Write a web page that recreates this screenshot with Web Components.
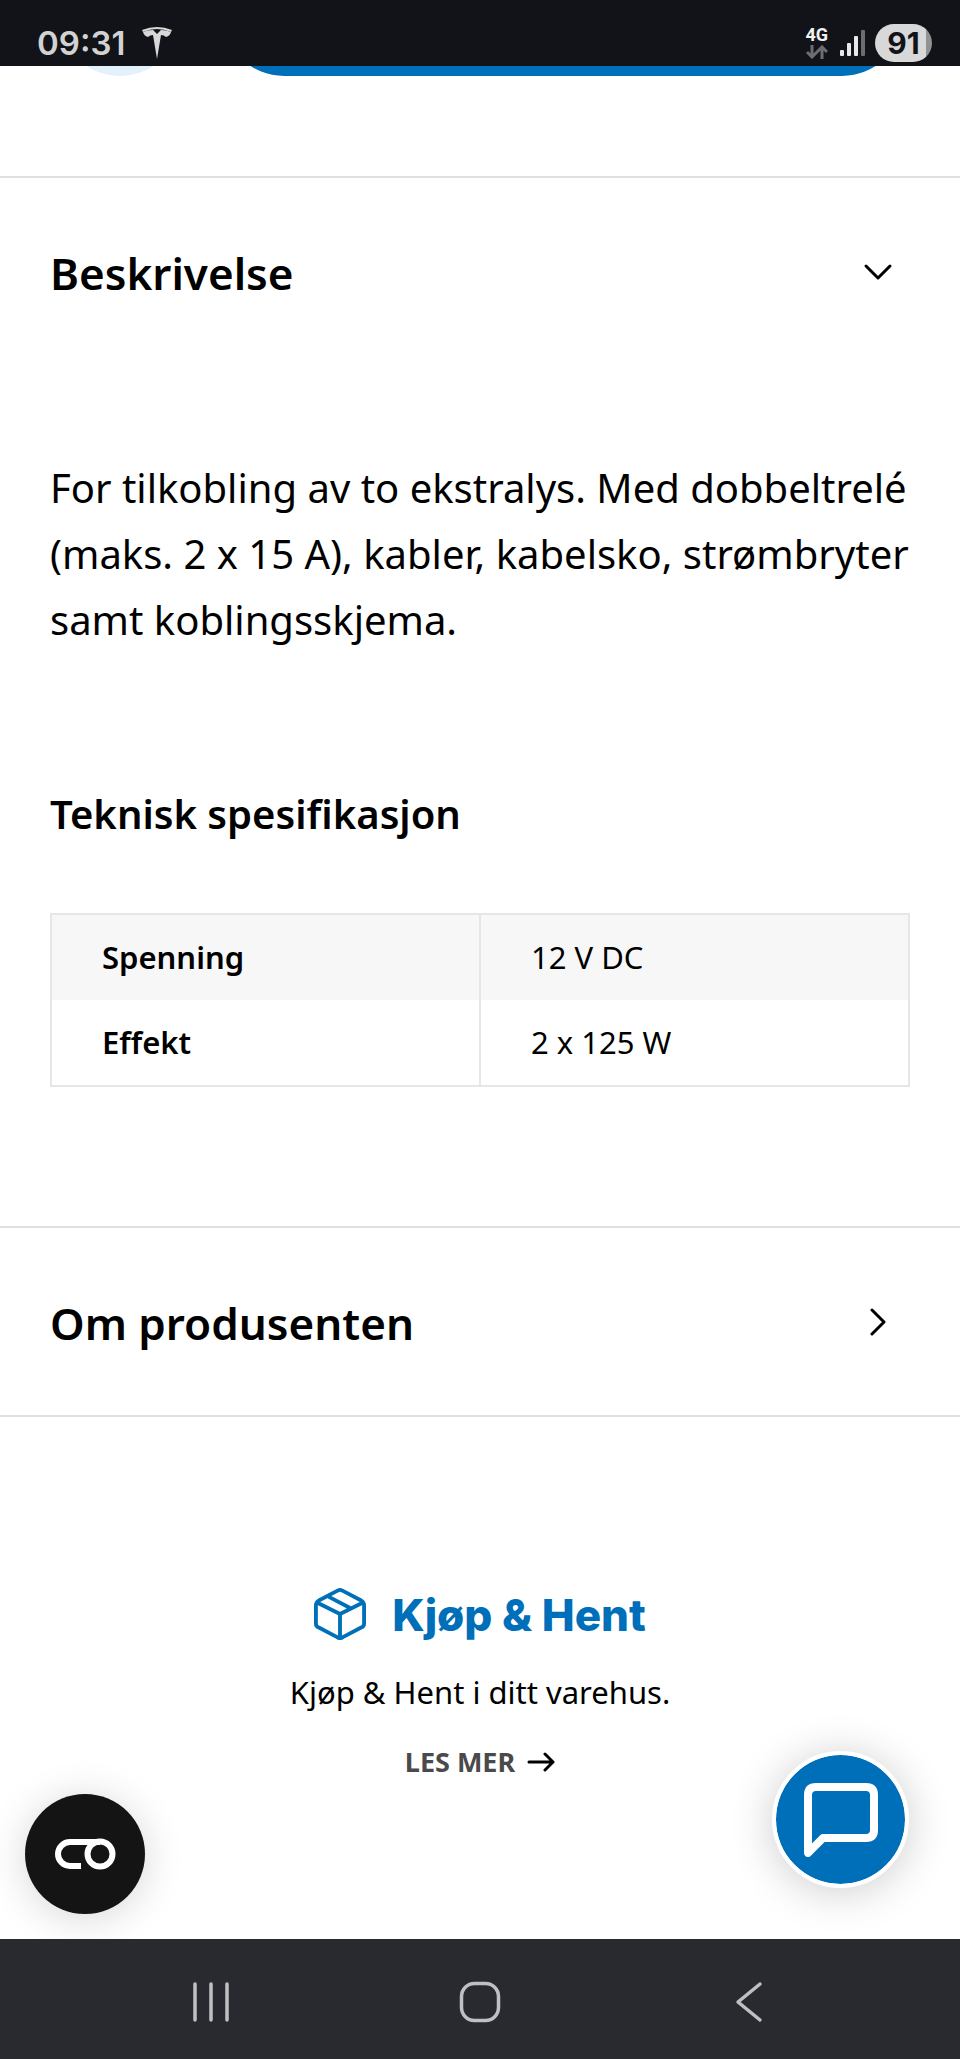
<!DOCTYPE html>
<html lang="no">
<head>
<meta charset="UTF-8">
<meta name="viewport" content="width=device-width, initial-scale=1">
<title>Produkt</title>
<style>
    :root {
        --blue: #006fba;
        --line: #e0e0e0;
        --text: #000;
        --gutter: 50px;
    }
    * { box-sizing: border-box; }
    body {
        margin: 0;
        background: #fff;
        color: var(--text);
        font-family: "Noto Sans", "Open Sans", sans-serif;
    }
</style>
</head>
<body>
<product-page></product-page>

<script>
// --- Base: sets up the shadow root from a static template string ---
class BaseElement extends HTMLElement {
    constructor() {
        super();
        this.attachShadow({ mode: 'open' });
    }

    connectedCallback() {
        this.render();
    }

    render() {
        this.shadowRoot.innerHTML = `
            <style>
                *, *::before, *::after { box-sizing: border-box; }
                button { font: inherit; color: inherit; border: 0; padding: 0; margin: 0; background: none; cursor: pointer; }
                h2, h3, p { margin: 0; }
                svg { display: block; flex: none; }
            </style>
            ${this.template()}
        `;
    }
}

// --- Phone status bar ---
class StatusBar extends BaseElement {
    template() {
        return `
            <style>
                :host {
                    display: flex;
                    justify-content: space-between;
                    align-items: flex-end;
                    height: 66px;
                    padding: 0 28px 4px 37px;
                    background: #121318;
                    color: #d2d2d2;
                    font-family: Inter, Roboto, sans-serif;
                }
                .left, .right { display: flex; align-items: center; }
                .left { gap: 16px; }
                .time { font-size: 33px; line-height: 38px; font-weight: 600; }
                .network { display: grid; justify-items: center; gap: 2px; margin-right: 12px; }
                .network span { font: 700 18px/16px Roboto, sans-serif; color: #f2f2f2; }
                .signal { margin-right: 10px; }
                .battery {
                    width: 57px;
                    height: 38px;
                    border-radius: 19px;
                    background: linear-gradient(90deg, #d8d8d8 51px, #929292 51px);
                    color: #121318;
                    font-size: 30px;
                    line-height: 38px;
                    font-weight: 700;
                    text-align: center;
                }
            </style>
            <div class="left">
                <span class="time">09:31</span>
                <svg width="32" height="34" viewBox="0 0 32 34" fill="#d8d8d8">
                    <path d="M1 4Q16-2 31 4L30 6Q16 0 2 6Z"/>
                    <path d="M2 6Q7 4 12 4L16 8L20 4Q25 4 30 6Q29 10 25 11Q23 9 20 9L16 33L12 9Q9 9 7 11Q3 10 2 6Z"/>
                </svg>
            </div>
            <div class="right">
                <div class="network">
                    <span>4G</span>
                    <svg width="22" height="14" viewBox="0 0 22 14" fill="none" stroke="#6c6d72" stroke-width="3">
                        <path d="M6 0V12M1 7L6 12L11 7M16 14V2M11 7L16 2L21 7"/>
                    </svg>
                </div>
                <svg class="signal" width="25" height="26" viewBox="0 0 25 26">
                    <g fill="#e8e8e8">
                        <rect x="0" y="20" width="4" height="6" rx="1"/>
                        <rect x="7" y="13" width="4" height="13" rx="1"/>
                        <rect x="14" y="6" width="4" height="20" rx="1"/>
                    </g>
                    <rect x="21" y="0" width="4" height="26" rx="1" fill="#6c6d72"/>
                </svg>
                <div class="battery">91</div>
            </div>
        `;
    }
}

// --- Bottom edge of the buy row, scrolled under the status bar ---
class BuyRow extends BaseElement {
    template() {
        return `
            <style>
                :host {
                    display: flex;
                    align-items: flex-end;
                    gap: 42px;
                    height: 10px;
                    margin-bottom: 100px;
                    padding: 0 57px 0 59px;
                    overflow: hidden;
                }
                button { height: 122px; border-radius: 61px; }
                .wish { width: 122px; background: #e3f1fa; }
                .buy { flex: 1; background: var(--blue); }
            </style>
            <button class="wish" aria-label="Favoritt"></button>
            <button class="buy" aria-label="Legg i handlekurv"></button>
        `;
    }
}

// --- Accordion section with slotted content ---
class AccordionSection extends BaseElement {
    template() {
        const open = this.hasAttribute('open');
        return `
            <style>
                :host { display: block; border-top: 2px solid var(--line); }
                button {
                    display: flex;
                    justify-content: space-between;
                    align-items: center;
                    width: 100%;
                    padding: 58px 66px 54px var(--gutter);
                    text-align: left;
                }
                .title { font-size: 44px; line-height: 75px; font-weight: 600; }
                .content { padding: 90px var(--gutter) 139px; }
                .content[hidden] { display: none; }
            </style>
            <h2>
                <button aria-expanded="${open}">
                    <span class="title">${this.getAttribute('heading')}</span>
                    <svg width="32" height="32" viewBox="0 0 32 32" fill="none" stroke="#000" stroke-width="3" stroke-linecap="round" stroke-linejoin="round">
                        <path d="${open ? 'M4 8L16 20L28 8' : 'M10 2L22 14L10 26'}"/>
                    </svg>
                </button>
            </h2>
            <div class="content" ${open ? '' : 'hidden'}><slot></slot></div>
        `;
    }

    render() {
        super.render();
        this.shadowRoot.querySelector('button').addEventListener('click', () => {
            this.toggleAttribute('open');
            this.render();
        });
    }
}

// --- Specification table ---
class SpecTable extends BaseElement {
    template() {
        const rows = JSON.parse(this.getAttribute('rows'));
        return `
            <style>
                :host { display: block; }
                table {
                    width: 100%;
                    table-layout: fixed;
                    border-collapse: collapse;
                    border: 2px solid #e6e6e6;
                    font-size: 31px;
                    line-height: 45px;
                }
                th, td { padding: 20px 50px; text-align: left; font-weight: 400; }
                th { font-weight: 600; border-right: 2px solid #e6e6e6; }
                tr:nth-child(odd) { background: #f7f7f7; }
            </style>
            <table>
                ${rows.map(([name, value]) => `<tr><th scope="row">${name}</th><td>${value}</td></tr>`).join('')}
            </table>
        `;
    }
}

// --- Click & collect ---
class PickupInfo extends BaseElement {
    template() {
        return `
            <style>
                :host {
                    display: flex;
                    flex-direction: column;
                    align-items: center;
                    padding: 166px var(--gutter) 140px;
                    border-top: 2px solid var(--line);
                }
                .head { display: flex; align-items: center; gap: 26px; color: var(--blue); }
                h3 { padding-top: 2px; font: 800 44px/60px Inter, sans-serif; }
                p { margin-top: 17px; font-size: 31px; line-height: 60px; }
                a {
                    display: flex;
                    align-items: center;
                    gap: 12px;
                    margin-top: 15px;
                    color: #4a4a4a;
                    font-size: 27px;
                    line-height: 50px;
                    font-weight: 700;
                    text-decoration: none;
                }
            </style>
            <div class="head">
                <svg width="52" height="52" viewBox="0 0 54 54" fill="none" stroke="currentColor" stroke-width="4" stroke-linejoin="round">
                    <path d="M27 2Q28 2 30 3L49 13Q52 15 52 18V37Q52 40 49 41L30 51Q27 53 24 51L5 41Q2 40 2 37V18Q2 15 5 13L24 3Q26 2 27 2Z"/>
                    <path d="M3 15L27 27L51 15M27 27V52M15 9L38 21"/>
                </svg>
                <h3>Kjøp &amp; Hent</h3>
            </div>
            <p>Kjøp &amp; Hent i ditt varehus.</p>
            <a href="#">LES MER
                <svg width="28" height="20" viewBox="0 0 28 20" fill="none" stroke="#000" stroke-width="3" stroke-linecap="round" stroke-linejoin="round">
                    <path d="M2 10H26M18 2L26 10L18 18"/>
                </svg>
            </a>
        `;
    }
}

// --- Floating round buttons ---
class CookieButton extends BaseElement {
    template() {
        return `
            <style>
                :host { display: block; }
                button {
                    display: grid;
                    place-items: center;
                    width: 120px;
                    height: 120px;
                    border-radius: 50%;
                    background: #141414;
                    box-shadow: 0 4px 40px rgba(0, 0, 0, 0.16);
                }
            </style>
            <button aria-label="Informasjonskapsler">
                <svg width="62" height="32" viewBox="0 0 62 32" fill="none" stroke="#fff" stroke-width="6">
                    <path d="M27 28H16A12 12 0 0 1 16 4H46"/>
                    <circle cx="46" cy="16" r="12.5"/>
                </svg>
            </button>
        `;
    }
}

class ChatButton extends BaseElement {
    template() {
        return `
            <style>
                :host { display: block; }
                button {
                    display: grid;
                    place-items: center;
                    width: 137px;
                    height: 137px;
                    border: 4px solid #fff;
                    border-radius: 50%;
                    background: var(--blue);
                    background-clip: padding-box;
                    box-shadow: 0 4px 44px rgba(0, 0, 0, 0.2);
                }
            </style>
            <button aria-label="Chat">
                <svg width="74" height="74" viewBox="0 0 74 74" fill="none" stroke="#fff" stroke-width="8" stroke-linejoin="round">
                    <path d="M4 70V12Q4 4 12 4H62Q70 4 70 12V47Q70 55 62 55H19Z"/>
                </svg>
            </button>
        `;
    }
}

// --- Android navigation bar ---
class SystemNav extends BaseElement {
    template() {
        return `
            <style>
                :host {
                    display: grid;
                    grid-template-columns: repeat(3, 1fr);
                    height: 120px;
                    padding: 0 76px;
                    background: #292a30;
                }
                button { display: grid; place-items: center; padding-top: 6px; }
                svg { fill: none; stroke: #c0c0c3; stroke-width: 3.5; stroke-linecap: round; stroke-linejoin: round; }
            </style>
            <button aria-label="Nylige">
                <svg width="42" height="42" viewBox="0 0 42 42"><path d="M5 3V39M21 3V39M37 3V39"/></svg>
            </button>
            <button aria-label="Hjem">
                <svg width="42" height="42" viewBox="0 0 42 42"><rect x="2.5" y="2.5" width="37" height="37" rx="13"/></svg>
            </button>
            <button aria-label="Tilbake">
                <svg width="42" height="42" viewBox="0 0 42 42"><path d="M32 3L10 21L32 39"/></svg>
            </button>
        `;
    }
}

// --- Page ---
class ProductPage extends BaseElement {
    template() {
        const specs = [['Spenning', '12 V DC'], ['Effekt', '2 x 125 W']];
        return `
            <style>
                :host { display: flex; flex-direction: column; min-height: 100vh; }
                main { position: relative; flex: 1; overflow: hidden; }
                .lead { font-size: 40px; line-height: 66px; }
                h3 { margin: 128px 0 66px; font-size: 40px; line-height: 66px; font-weight: 600; }
                cookie-button { position: absolute; left: 25px; bottom: 25px; }
                chat-button { position: absolute; right: 51px; bottom: 51px; }
            </style>
            <status-bar></status-bar>
            <main>
                <buy-row></buy-row>
                <accordion-section heading="Beskrivelse" open>
                    <p class="lead">For tilkobling av to ekstralys. Med dobbeltrelé (maks. 2 x 15 A), kabler, kabelsko, strømbryter samt koblingsskjema.</p>
                    <h3>Teknisk spesifikasjon</h3>
                    <spec-table rows='${JSON.stringify(specs)}'></spec-table>
                </accordion-section>
                <accordion-section heading="Om produsenten"></accordion-section>
                <pickup-info></pickup-info>
                <cookie-button></cookie-button>
                <chat-button></chat-button>
            </main>
            <system-nav></system-nav>
        `;
    }
}

// Define Custom Elements
customElements.define('status-bar', StatusBar);
customElements.define('buy-row', BuyRow);
customElements.define('accordion-section', AccordionSection);
customElements.define('spec-table', SpecTable);
customElements.define('pickup-info', PickupInfo);
customElements.define('cookie-button', CookieButton);
customElements.define('chat-button', ChatButton);
customElements.define('system-nav', SystemNav);
customElements.define('product-page', ProductPage);
</script>
</body>
</html>
